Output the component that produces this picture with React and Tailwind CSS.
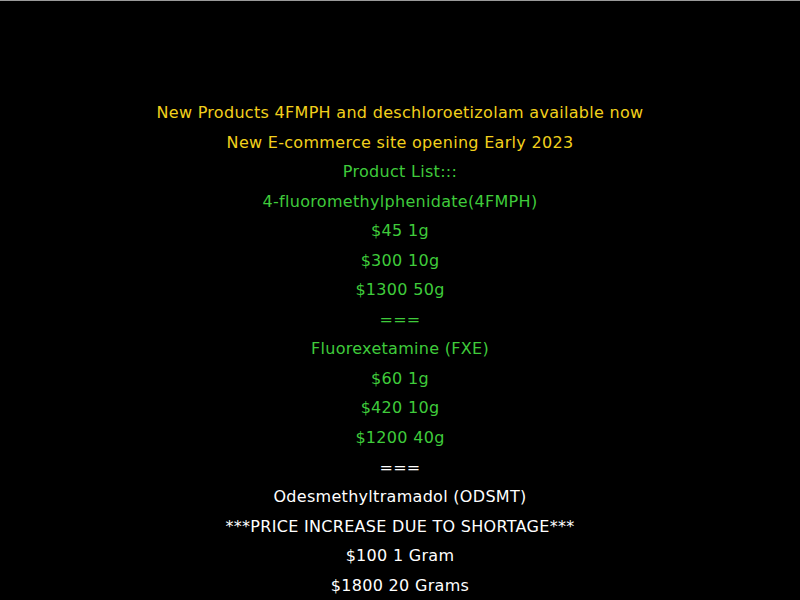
import React from 'react';

const lines = [
  { text: 'New Products 4FMPH and deschloroetizolam available now', color: 'text-[#f2d01c]' },
  { text: 'New E-commerce site opening Early 2023', color: 'text-[#f2d01c]' },
  { text: 'Product List:::', color: 'text-[#3fcb3b]' },
  { text: '4-fluoromethylphenidate(4FMPH)', color: 'text-[#3fcb3b]' },
  { text: '$45 1g', color: 'text-[#3fcb3b]' },
  { text: '$300 10g', color: 'text-[#3fcb3b]' },
  { text: '$1300 50g', color: 'text-[#3fcb3b]' },
  { text: '===', color: 'text-[#3fcb3b]' },
  { text: 'Fluorexetamine (FXE)', color: 'text-[#3fcb3b]' },
  { text: '$60 1g', color: 'text-[#3fcb3b]' },
  { text: '$420 10g', color: 'text-[#3fcb3b]' },
  { text: '$1200 40g', color: 'text-[#3fcb3b]' },
  { text: '===', color: 'text-white' },
  { text: 'Odesmethyltramadol (ODSMT)', color: 'text-white' },
  { text: '***PRICE INCREASE DUE TO SHORTAGE***', color: 'text-white' },
  { text: '$100 1 Gram', color: 'text-white' },
  { text: '$1800 20 Grams', color: 'text-white' },
];

const App = () => {
  return (
    <div className="min-h-screen bg-black border-t border-[#9a9a9a] pt-[97px] font-['DejaVu_Sans',sans-serif]">
      <div className="flex flex-col items-center text-[16px] tracking-[0.3px] leading-[29.55px]">
        {lines.map((l, i) => (
          <p key={i} className={`${l.color} text-center`}>
            {l.text}
          </p>
        ))}
      </div>
    </div>
  );
};

export default App;
